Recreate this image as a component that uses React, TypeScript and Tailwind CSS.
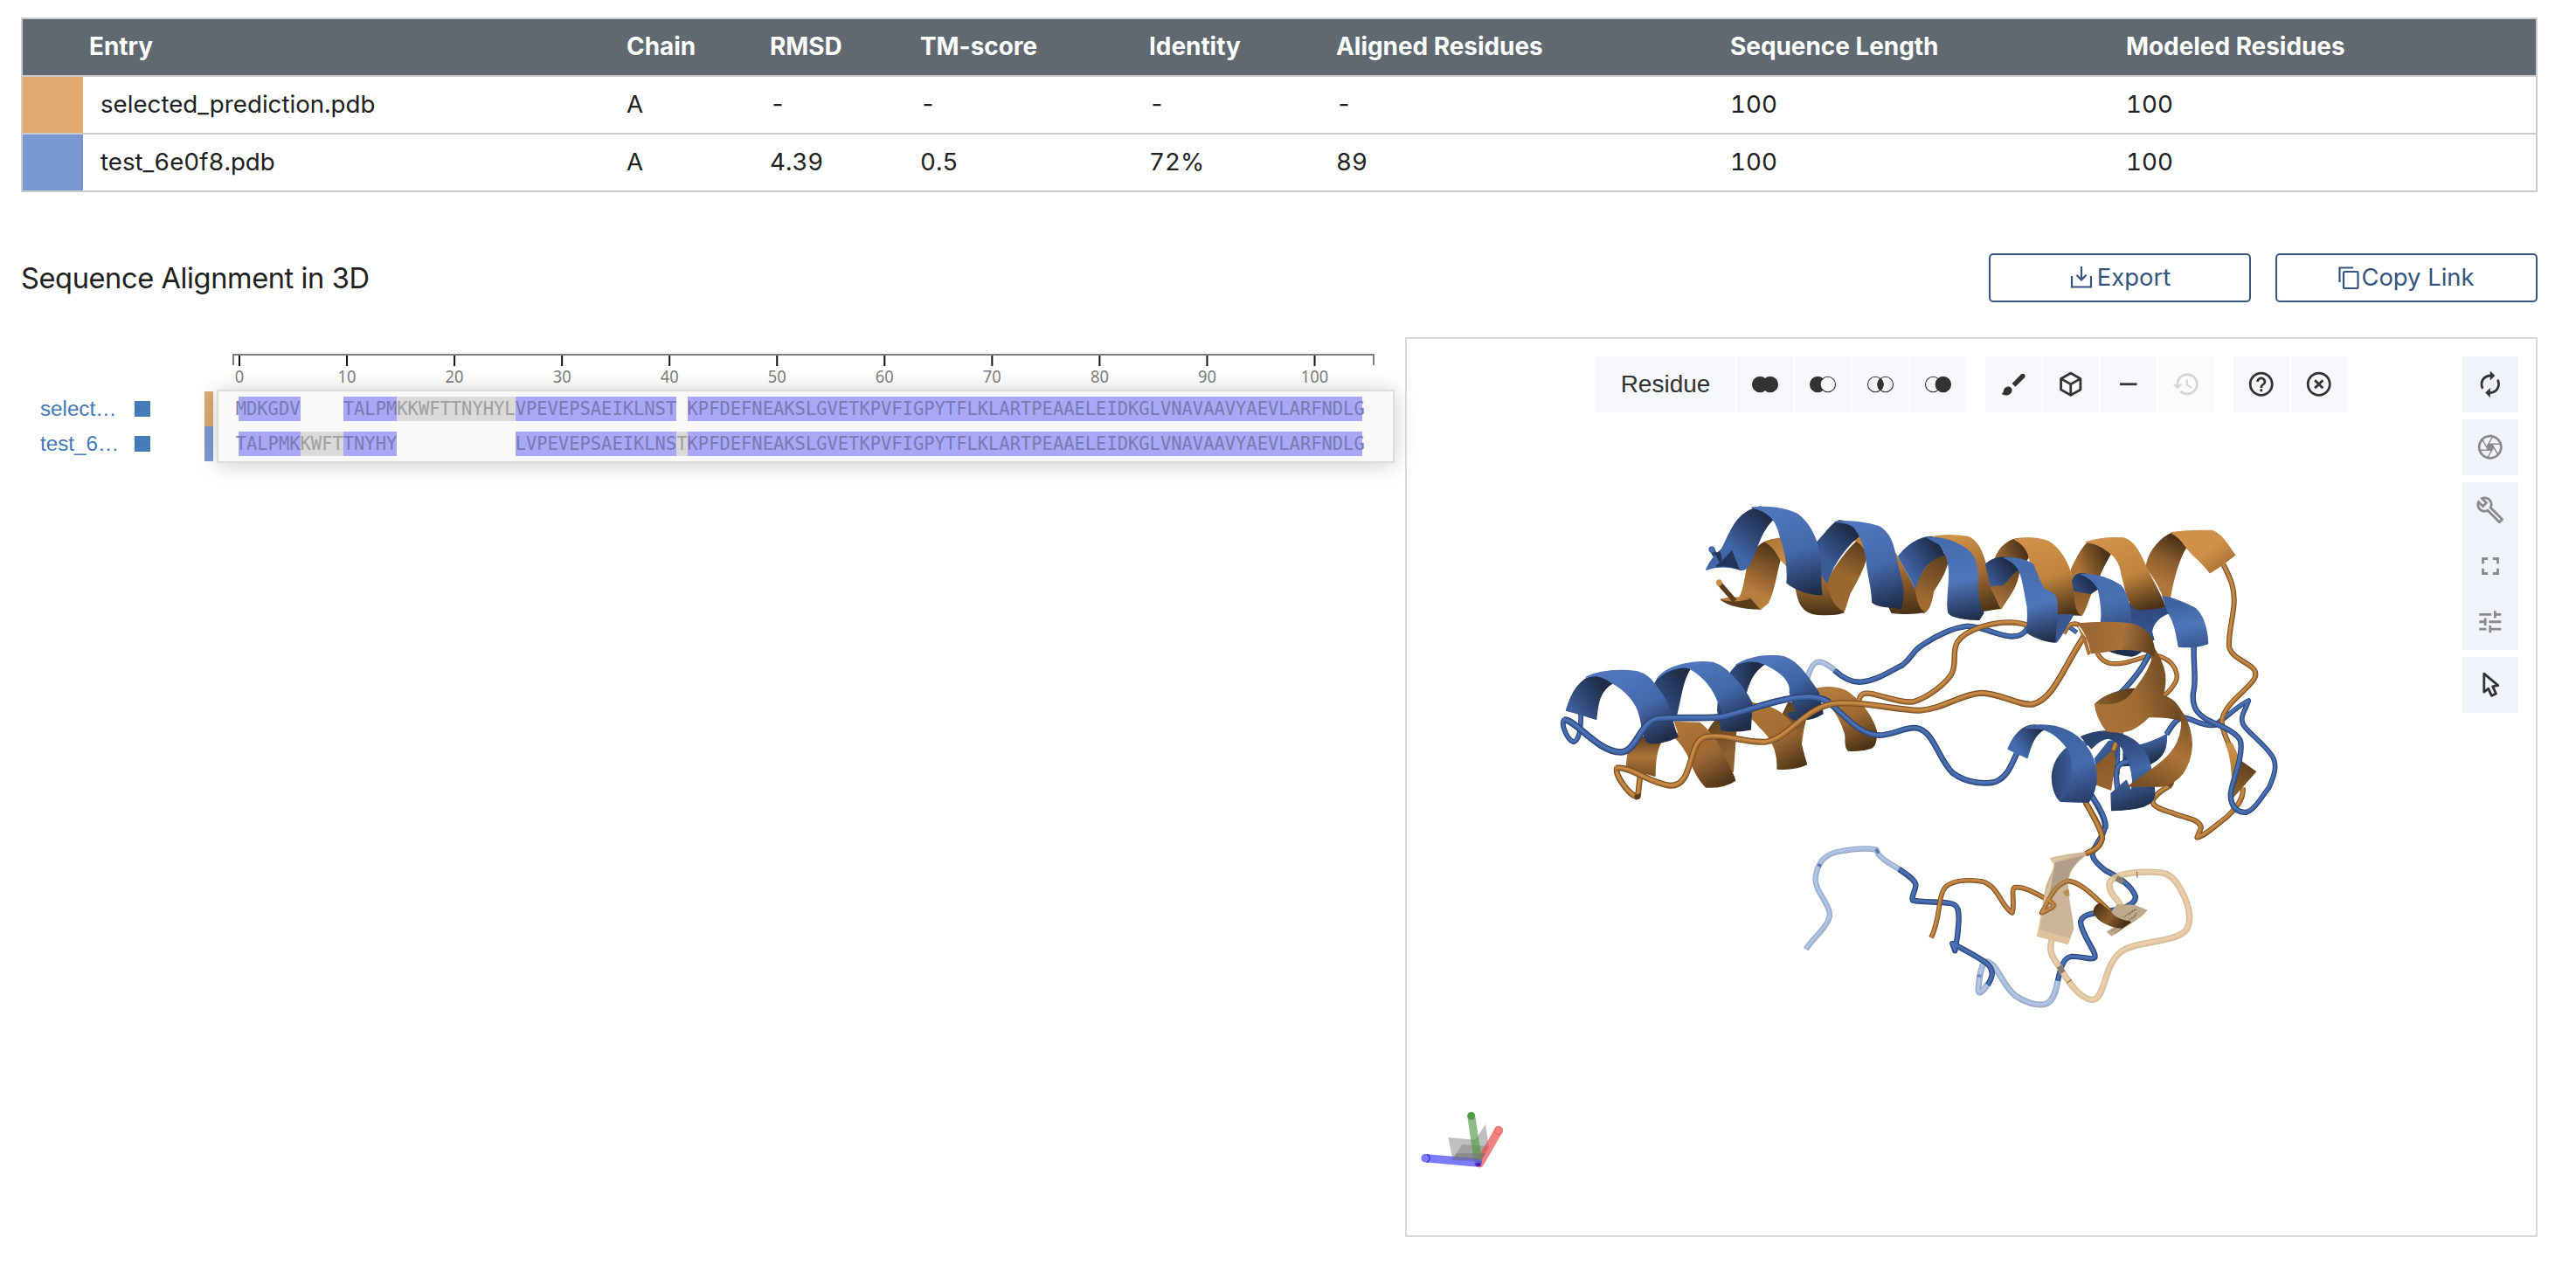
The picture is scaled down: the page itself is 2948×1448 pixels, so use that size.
import React from "react";
import { MdAutorenew, MdOutlineCamera, MdOutlineBuild, MdFullscreen, MdTune, MdHelpOutline, MdHighlightOff, MdHistory, MdRemove } from "react-icons/md";

/* ---------- summary table ---------- */
const COLS = "grid grid-cols-[69px_622px_164px_172px_262px_214px_451px_453px_1fr] items-center whitespace-nowrap";
const HEAD = ["Chain", "RMSD", "TM-score", "Identity", "Aligned Residues", "Sequence Length", "Modeled Residues"];
const ROWS = [
  { swatch: "bg-[#dfa970]", cells: ["selected_prediction.pdb", "A", "-", "-", "-", "-", "100", "100"] },
  { swatch: "bg-[#7998d1]", cells: ["test_6e0f8.pdb", "A", "4.39", "0.5", "72%", "89", "100", "100"] },
];

function SummaryTable() {
  return (
    <div className="border-2 border-[#cbcbcb] text-[#212121]">
      <div className={COLS + " h-16 bg-[#606972] text-[27.9px] text-white font-bold"}>
        <span />
        <span className="pl-[7px]">Entry</span>
        {HEAD.map((h) => <span key={h}>{h}</span>)}
      </div>
      {ROWS.map((r) => (
        <div key={r.cells[0]} className={COLS + " h-[66px] border-t-2 border-[#cbcbcb] text-[27.7px] tabular-nums"}>
          <span className={"self-stretch " + r.swatch} />
          {r.cells.map((c, i) => <span key={i} className={i === 0 ? "pl-5" : ""}>{c}</span>)}
        </div>
      ))}
    </div>
  );
}

/* ---------- sequence alignment ---------- */
const TAIL = "KPFDEFNEAKSLGVETKPVFIGPYTFLKLARTPEAAELEIDKGLVNAVAAVYAEVLARFNDLG";
type Seg = ["a" | "u" | "g", string];
const SEQ1: Seg[] = [["a", "MDKGDV"], ["g", "    "], ["a", "TALPM"], ["u", "KKWFTTNYHYL"], ["a", "VPEVEPSAEIKLNST"], ["g", " "], ["a", TAIL]];
const SEQ2: Seg[] = [["a", "TALPMK"], ["u", "KWFT"], ["a", "TNYHY"], ["g", "           "], ["a", "LVPEVEPSAEIKLNS"], ["u", "T"], ["a", TAIL]];
const SEGCLS = { a: "bg-[#a8a8f7] text-[#7979b4]", u: "bg-[#dadada] text-[#9e9e9e]", g: "" };

function SeqRow({ segs }: { segs: Seg[] }) {
  return (
    <div className="ml-[23px] flex h-7 font-['DejaVu_Sans_Mono',monospace] text-[20.44px] leading-[29px] whitespace-pre">
      {segs.map(([k, t], i) => (
        <span
          key={i}
          className={SEGCLS[k] + (i === 0 ? " indent-[-3.3px]" : "") + (i === segs.length - 1 ? " w-[772px]" : "")}
        >
          {t}
        </span>
      ))}
    </div>
  );
}

function Alignment() {
  const ticks = [0, 10, 20, 30, 40, 50, 60, 70, 80, 90, 100];
  return (
    <div className="w-[1584px] pt-[17px]">
      <svg width="1350" height="43" className="ml-[222px] block" fontFamily="'Noto Sans', sans-serif" fontSize="20">
        <path d="M21 15V3H1326V15" fill="none" stroke="#808080" strokeWidth="2" />
        {ticks.map((t) => {
          const x = 28 + t * 12.305;
          return (
            <g key={t}>
              <rect x={x - 1} y="4" width="2" height="12" fill="#111" />
              <text x={x} y="35" textAnchor="middle" fill="#808080" textLength={t === 0 ? 10.5 : t === 100 ? 31.5 : 21} lengthAdjust="spacingAndGlyphs">{t}</text>
            </g>
          );
        })}
      </svg>
      <div className="flex">
        <div className="w-[210px] pt-[2px] font-['Liberation_Sans',sans-serif] text-[24.2px] text-[#447ab5]">
          {["select…", "test_6…"].map((n) => (
            <div key={n} className="flex h-10 items-center pl-[22px]">
              <span className="w-[108px]">{n}</span>
              <span className="size-[18px] bg-[#447ab5]" />
            </div>
          ))}
        </div>
        <div className="mt-[2px] mr-1 w-[10px]">
          <div className="h-10 bg-[#dca972]" />
          <div className="h-10 bg-[#8199cf]" />
        </div>
        <div className="flex h-[84px] w-[1348px] flex-col gap-3 border-2 border-[#dcdcdc] bg-[#f9f9f9] pt-[6px] shadow-[0_2px_24px_rgba(0,0,0,0.2)]">
          <SeqRow segs={SEQ1} />
          <SeqRow segs={SEQ2} />
        </div>
      </div>
    </div>
  );
}

/* ---------- protein drawing ---------- */
const PAL = {
  b: ["#29406d", "#3c5f9f", "#4b71b7"],
  o: ["#744c20", "#a97137", "#c98a45"],
  pb: ["#93a5c4", "#a5b7da", "#b3c5e5"],
  po: ["#cdb08a", "#dfbf95", "#e8c89e"],
};
function Tube({ d, c, w = 19, o = 1 }: { d: string; c: keyof typeof PAL; w?: number; o?: number }) {
  const [a, m, l] = PAL[c];
  return (
    <g fill="none" strokeLinejoin="round" opacity={o}>
      <path d={d} stroke={a} strokeWidth={w} />
      <path d={d} stroke={m} strokeWidth={w * 0.72} />
      <path d={d} stroke={l} strokeWidth={w * 0.36} transform="translate(-1 -2)" />
    </g>
  );
}
const BL = "#4f76bc", BM = "#3d5f9c", BD = "#1f2d49";
const OL = "#cf9049", OM = "#ad7438", OD = "#4c3317";

let seq = 0;
function Rib({ d, g, s }: { d: string; g: [number, number, number, number]; s: string[] }) {
  const id = React.useMemo(() => "rib" + seq++, []);
  return (
    <>
      <linearGradient id={id} gradientUnits="userSpaceOnUse" x1={g[0]} y1={g[1]} x2={g[2]} y2={g[3]}>
        {s.map((c, i) => <stop key={i} offset={i / (s.length - 1)} stopColor={c} />)}
      </linearGradient>
      <path d={d} fill={`url(#${id})`} stroke={`url(#${id})`} strokeWidth="4" strokeLinejoin="round" />
    </>
  );
}
const T = "scale(0.333333)";
const GA = "translate(1760 560) " + T;
const GB = "translate(2200 560) " + T;
const GC = "translate(2040 900) " + T;
const GD = "translate(1600 1240) " + T;

function Protein() {
  return (
    <svg viewBox="1610 388 1292 1026" className="absolute inset-0 h-full w-full">
      {/* lower loops */}
      <g transform={GC}>
        <Tube c="pb" d="M80 560C105 520 160 480 162 440C160 400 110 360 113 315C118 270 140 235 190 225C240 215 290 212 322 218L330 235C350 260 380 270 400 285" />
        <path d="M121 268l12 7M320 216l10 14" stroke="#5879b0" strokeWidth="10" />
        <Tube c="pb" w={21} d="M704 680C685 710 672 715 672 700C675 650 685 605 700 602C740 610 750 680 800 720C850 752 890 755 910 745C935 730 940 690 945 668" />
        <path d="M668 651h15" stroke="#6d8ac0" strokeWidth="10" />
        <Tube c="b" d="M400 285C430 305 460 325 457 342C455 362 440 380 447 392C480 400 540 395 575 402C605 407 605 430 605 460C603 490 600 520 597 535L592 565L583 540C620 560 690 595 708 615C730 640 715 665 704 682" />
        <Tube c="b" d="M945 668C955 620 965 590 990 585C1030 583 1060 600 1072 588C1080 570 1025 510 1023 465C1030 440 1060 438 1100 430C1160 425 1210 410 1212 380C1200 340 1150 310 1110 290C1070 260 1060 240 1065 225C1080 190 1110 160 1107 130C1100 90 1075 60 1060 30" />
        <Tube c="po" w={22} o={0.88} d="M928 515C908 570 930 590 950 620C980 670 1020 732 1065 734C1110 725 1100 620 1160 570C1210 530 1330 540 1380 500C1410 470 1395 410 1375 370C1350 320 1330 298 1290 296C1220 290 1130 300 1122 335C1120 370 1150 385 1158 405C1160 425 1160 440 1165 450" />
        <path d="M1216 292l2 22M976 676l16-12" stroke="#94703f" strokeWidth="4" />
        <path d="M1146 316l24 14M950 618l12 22" stroke="#877c71" strokeWidth="19" />
        <path d="M1148 405L1210 408L1253 425L1240 440L1215 460L1130 515L1112 500L1150 475L1100 470Z" fill="#c0a88a" />
        <path d="M1170 450l30-20 18-8M1180 465l36-22M1130 497l25-14M1190 440l20-18M1200 455l16-20M1142 505l30-22" fill="none" stroke="#6d543a" strokeWidth="4" strokeDasharray="3 4" />
        <Tube c="o" w={17} d="M510 520C545 450 530 380 560 345C590 320 650 320 690 328C740 345 750 410 788 435C800 400 780 350 800 347C840 345 880 375 920 395C950 412 930 415 890 435C910 400 930 340 980 325C1030 330 1080 390 1125 430" />
        <Rib d="M1068 432C1070 415 1080 405 1090 403L1125 430C1140 455 1170 460 1194 467L1165 486C1130 485 1080 465 1068 432Z" g={[1080, 405, 1180, 480]} s={["#4a3016", "#8a5c2b", "#3c2813"]} />
        <path d="M917 247C950 238 1010 228 1045 226L1040 240C990 275 980 310 981 350C985 410 1000 460 1000 490L980 543L873 515C890 470 890 400 905 340C920 300 935 280 930 265Z" fill="#c3a985" opacity=".86" />
        <path d="M917 247L930 268C935 300 905 350 893 400L873 515L882 492C900 400 925 340 942 275L938 262L1010 235Z" fill="#e2c39c" opacity=".85" />
        <path d="M935 262L1035 238C990 275 980 310 981 320C965 325 945 350 915 380Z" fill="#a39482" opacity=".7" />
        <path d="M873 515L882 492L985 520L980 543Z" fill="#dfc29c" />
        <path d="M962 362l20-10 4 24-14 2z" fill="#b98f59" />
        <Tube c="o" w={15} d="M905 388C950 412 930 415 890 435C910 400 930 340 980 325" o={0.85} />
        <Tube c="o" d="M1040 55C1060 90 1100 150 1097 180C1090 210 1070 220 1040 232" />
      </g>

      {/* right hand loops and small strands */}
      <g transform={GB}>
        <Tube c="o" w={16} d="M600 562C620 600 650 605 700 595C760 580 790 560 830 580C870 600 880 640 870 660C855 690 840 700 826 712" />
        <Tube c="b" d="M782 560C755 620 710 670 680 700" />
        <Tube c="b" w={15} d="M775 470L790 520M705 395L725 410M500 470L530 492" />
        <Tube c="b" d="M665 860C675 900 665 930 668 980M555 875L600 850" />
        <Rib d="M592 925L640 865L676 862L665 930L650 1000L600 960Z" g={[600, 900, 670, 960]} s={[BM, "#2c4472"]} />
        <Rib d="M690 888C740 885 800 865 838 842C840 890 830 920 780 945L690 950Z" g={[760, 870, 780, 940]} s={[BM, BD]} />
        <Tube c="b" d="M670 1030C660 960 665 940 710 935" />
        <Tube c="o" d="M682 830L655 897" />
        <Rib d="M597 948L655 897L662 930L647 1032L592 1012Z" g={[600, 950, 660, 1030]} s={["#8a5c2a", "#9b6630"]} />
        <Tube c="o" w={18} d="M1100 1025C1105 1060 1080 1095 1040 1130C1000 1160 970 1190 943 1196L957 1162C950 1130 900 1130 860 1112C820 1100 790 1090 790 1072C800 1045 830 1030 850 1018" />
        <path d="M835 1015l33-20-6 20-8 12z" fill="#6f4a22" />
        <Tube c="b" d="M1010 808C970 818 930 790 900 785C870 785 855 815 838 842" />
        <Tube c="b" w={17} d="M1000 812C1050 780 1080 745 1120 726C1110 760 1090 775 1100 805C1110 830 1170 870 1200 915C1220 945 1210 980 1190 1025C1165 1055 1140 1105 1108 1110" />
        <Tube c="o" w={18} d="M1033 258C1060 310 1072 340 1070 390C1068 440 1048 500 1054 545C1065 580 1110 590 1135 615C1160 640 1130 665 1100 695C1070 722 1030 760 1028 800C1030 830 1046 860 1054 880" />
        <Rib d="M1102 940L1144 970L1068 1056C1066 1020 1080 980 1082 925Z" g={[1140, 950, 1070, 1040]} s={["#5d3f1d", "#8a5d2c"]} />
        <Rib d="M1042 876L1063 873L1084 918C1078 960 1068 990 1065 1010C1062 950 1058 910 1042 876Z" g={[1050, 880, 1070, 1000]} s={[OL, OM]} />
        <Tube c="b" d="M932 535C930 620 942 650 930 700C925 750 945 775 985 795C1030 815 1090 840 1093 870C1100 930 1060 1010 1058 1050C1060 1100 1090 1112 1115 1109" />
      </g>

      {/* middle loops */}
      <g transform={GA}>
        <Tube c="pb" w={19} d="M925 650C936 610 950 590 968 593C990 597 1005 610 1018 620" />
        <Tube c="b" d="M1018 622C1050 650 1080 665 1110 662C1160 658 1200 630 1250 605C1290 575 1280 560 1320 535C1370 500 1430 475 1475 470C1540 475 1570 500 1620 505C1650 508 1670 500 1685 470" />
        <Tube c="o" d="M1100 735C1105 700 1120 697 1150 703C1200 715 1250 735 1290 730C1350 710 1400 665 1420 635C1440 600 1420 560 1440 525C1470 480 1560 457 1620 457C1660 458 1680 465 1700 475" />
        <Tube c="o" w={17} d="M1805 495C1820 465 1835 455 1858 466" />
      </g>

      {/* lower left helices */}
      <g transform={GA}>
        <Tube c="b" d="M147 765C150 830 138 866 122 868C100 860 75 800 92 790" w={17} />
        <Rib d="M310 900L355 845L378 868L422 870C405 900 402 940 402 985L303 958Z" g={[350, 850, 350, 985]} s={["#5d3f1d", OM, "#7a5126"]} />
        <Rib d="M583 832C600 800 630 770 645 755L680 830L670 970C650 940 620 880 600 850Z" g={[600, 780, 670, 900]} s={["#5d3f1d", "#8f6030"]} />
        <Rib d="M470 800L555 802C590 830 600 850 615 870C640 920 665 960 677 1000C650 1018 610 1025 577 1023C545 990 530 950 525 935C510 900 490 870 468 850L482 835Z" g={[520, 810, 640, 1020]} s={[OM, "#9b6732", OD]} />
        <Rib d="M838 778L860 733L885 735L885 790L918 795C908 830 906 860 905 870C890 830 865 800 838 778Z" g={[840, 740, 900, 860]} s={["#5d3f1d", "#9b6732"]} />
        <Rib d="M735 733L800 750C850 770 880 810 900 850C905 890 915 920 923 945C890 960 850 962 822 960C825 900 800 850 760 815C740 790 725 780 718 770Z" g={[760, 750, 890, 960]} s={[OM, "#a06b33", OD]} />
        <Rib d="M955 685C1000 675 1050 680 1075 705C1120 740 1150 790 1162 830C1163 860 1160 880 1145 888C1120 897 1090 900 1065 897C1050 880 1060 860 1055 840C1040 790 1020 760 1000 740Z" g={[1020, 690, 1110, 895]} s={["#b47a3c", "#9b6732", OD]} />
        <Rib d="M97 760C115 700 140 650 205 635C230 640 245 655 258 665C210 690 205 740 200 790L130 768Z" g={[105, 740, 215, 670]} s={[BM, BD]} />
        <Rib d="M396 680C415 625 470 605 500 608L522 618C495 660 490 720 475 778L435 790C425 760 400 720 385 690Z" g={[420, 700, 500, 650]} s={["#2f4877", BD]} />
        <Rib d="M655 640C680 595 720 580 745 585L780 600C745 620 725 660 716 695L700 720C680 690 665 670 650 645Z" g={[670, 620, 740, 610]} s={["#2f4877", BD]} />
        <Rib d="M165 645C220 620 290 620 340 626C370 635 390 652 402 672C425 700 440 722 450 750C460 790 470 830 480 850C450 865 400 880 375 868C355 845 360 810 350 780C340 730 300 690 255 665C235 650 215 643 200 640Z" g={[300, 630, 430, 860]} s={[BL, "#4468ab", BD]} />
        <path d="M618 720L655 775L650 820L628 828L615 760Z" fill="#2c4370" />
        <Rib d="M410 650C450 600 540 588 600 595C630 605 650 620 665 640C695 668 715 695 735 735L730 825C690 832 650 832 628 825L640 780C615 720 600 660 520 615C495 605 440 620 410 650Z" g={[560, 595, 690, 820]} s={[BL, "#4267a9", BD]} />
        <Rib d="M680 603C740 570 790 570 830 573C890 580 930 650 965 700L978 770C950 790 910 795 885 792C870 790 860 780 858 768L885 765L865 700C870 660 840 630 778 600C745 585 715 587 680 603Z" g={[800, 580, 940, 780]} s={[BL, "#3f63a4", BD]} />
        <Tube c="b" w={23} d="M90 792C130 790 200 900 285 903C340 900 350 800 410 788C500 780 580 790 640 780C740 755 830 715 930 713C960 714 985 722 1000 732" />
        <Tube c="b" w={20} d="M1000 735C1050 770 1100 843 1170 845C1220 845 1260 815 1300 820C1360 830 1375 930 1425 975C1475 1012 1540 1013 1570 1005C1610 990 1625 950 1645 905" />
        <Tube c="o" w={20} d="M352 975L343 1055C320 1060 260 980 272 955" />
        <path d="M330 1050l24-6-4 18-14 5z" fill="#5a3c1b" />
        <Tube c="o" w={21} d="M268 958C320 950 380 1010 455 1018C540 1020 510 860 580 850C650 840 700 870 780 868C860 860 920 740 1030 735C1130 730 1220 757 1310 760C1390 755 1450 705 1520 700C1590 700 1650 745 1700 738C1770 720 1800 620 1875 505" />
      </g>

      {/* top helices: orange */}
      <g transform={GA}>
        <Rib d="M692 372C712 340 710 290 722 262C740 210 760 185 790 178L832 240C815 300 812 350 790 390L763 413L730 378Z" g={[810, 190, 740, 350]} s={[OD, "#83572a", "#b87c3d"]} />
        <Rib d="M780 180C800 172 820 168 845 169L870 280L832 240C820 215 805 195 780 180Z" g={[830, 170, 850, 260]} s={["#b0763a", OL]} />
        <path d="M625 378C650 372 700 370 730 374L763 413C710 413 650 402 625 378Z" fill="#5b3d1b" />
        <path d="M625 378C650 368 700 368 728 376C700 388 650 388 625 378Z" fill="#b97d3e" />
        <path d="M622 322L676 384" stroke="#5b3d1b" strokeWidth="17" />
        <ellipse cx="622" cy="321" rx="10" ry="11" fill="#cf9049" />
        <Rib d="M992 320C1010 280 1060 210 1100 175L1130 215C1125 270 1085 330 1070 360C1060 390 1055 415 1048 424C1010 405 1000 370 992 320Z" g={[1105, 190, 1020, 400]} s={["#5d3f1d", "#99672f", "#9b6732"]} />
        <Rib d="M885 335L945 330L955 250L970 262L992 320C1000 370 1010 400 1048 422C1035 431 1000 432 960 430C905 425 893 385 885 335Z" g={[970, 270, 970, 425]} s={[OM, "#8a5d2c", OD]} />
        <path d="M1075 172L1118 158L1132 225C1115 195 1100 180 1075 172Z" fill="#bd8140" />
        <Rib d="M1293 340C1310 300 1330 270 1350 250C1370 235 1385 230 1410 215C1410 280 1375 320 1358 350C1350 390 1345 415 1325 424C1305 410 1300 380 1293 340Z" g={[1390, 230, 1320, 380]} s={["#5d3f1d", "#a06b33"]} />
        <Rib d="M1212 195C1250 260 1275 300 1293 345C1300 380 1305 410 1325 422C1290 428 1240 428 1215 424L1203 400L1230 395L1235 340Z" g={[1250, 260, 1270, 420]} s={[OM, "#7a5126", OD]} />
      </g>
      <g transform={GB}>
        <Rib d="M35 163C80 155 120 158 155 163C190 175 205 215 218 260C230 320 250 370 272 408L195 420L165 330C180 260 160 215 110 180Z" g={[140, 160, 230, 415]} s={[OL, "#a06b33", OD]} />
        <Rib d="M230 325L280 322C300 305 320 280 335 260C330 320 310 350 290 380L270 410Z" g={[320, 280, 250, 390]} s={["#6a4720", "#a9713a"]} />
        <Rib d="M248 245C260 200 300 165 345 170L375 215C365 235 355 245 350 255C320 238 270 235 248 245Z" g={[255, 230, 345, 200]} s={["#9b6732", OD]} />
        <Rib d="M318 173C360 163 400 168 430 178C470 200 500 250 512 300C522 340 522 390 547 432L455 430C450 370 430 350 405 345C385 310 365 280 370 255C368 220 350 190 318 173Z" g={[400, 170, 490, 430]} s={[OL, "#c0843f", OD]} />
        <Rib d="M520 340L582 350C567 385 560 415 547 432C525 420 525 390 520 340Z" g={[545, 350, 540, 430]} s={["#8a5d2c", "#a06b33"]} />
        <Rib d="M510 278C530 235 550 195 572 180C600 178 630 200 648 218C630 250 612 280 606 303L545 295L518 310Z" g={[530, 260, 625, 220]} s={[OM, OD]} />
        <Rib d="M770 258C780 210 820 165 862 148L905 200C880 240 865 290 850 372L828 372C810 320 790 300 768 265Z" g={[890, 180, 820, 320]} s={[OD, "#8a5d2c", "#b0763a"]} />
        <Rib d="M855 150C900 140 950 143 995 142C1030 155 1050 195 1073 226L1040 252L987 287C970 260 930 230 905 198C890 175 875 160 855 150Z" g={[940, 150, 1030, 270]} s={[OL, OL, OM]} />
      </g>

      {/* top helices: blue */}
      <g transform={GB}>
        <Rib d="M705 395L728 405L834 400L848 425C800 440 780 480 790 510C780 540 740 570 718 573C680 570 650 560 635 552L705 465L708 430Z" g={[760, 410, 720, 570]} s={["#2f4a7f", "#35548c", BD]} />
        <Rib d="M825 368C860 372 910 395 938 410C970 440 978 490 980 530C950 542 910 543 880 540C872 500 868 460 845 425Z" g={[900, 390, 930, 540]} s={["#3f62a2", BL, "#3b5a94"]} />
        <Rib d="M562 182C600 170 650 165 690 168C730 180 745 220 765 260C785 310 815 350 832 402C800 412 760 415 728 410C700 380 695 330 685 295C680 250 655 225 640 215C610 190 590 186 562 182Z" g={[680, 170, 770, 412]} s={[OL, "#c0843f", OD]} />
        <Rib d="M515 315C520 295 535 288 555 290C580 300 600 325 605 340L578 358L522 348Z" g={[530, 340, 580, 310]} s={["#2f4877", BD]} />
        <Rib d="M545 292C600 290 650 310 680 330C700 350 705 380 712 410L718 465L613 458C620 420 610 370 603 340C590 320 570 300 545 292Z" g={[620, 295, 670, 465]} s={["#476cb0", "#4a70b4", "#38568f"]} />
        <Rib d="M218 258C240 235 270 232 295 235C315 245 325 260 332 275C300 290 290 320 275 328L235 332Z" g={[230, 320, 300, 260]} s={["#3a5a95", BD]} />
        <Rib d="M455 430L518 432C495 470 475 510 460 525L430 500Z" g={[500, 430, 460, 520]} s={["#38568f", "#3a5a95"]} />
        <Rib d="M280 235C320 232 360 245 380 258C395 295 405 325 420 345C440 352 455 360 460 375C470 420 455 480 456 525C430 525 380 510 357 490C365 440 362 420 360 400C350 350 345 300 330 275C318 255 300 242 280 235Z" g={[370, 260, 430, 525]} s={["#466bae", BL, BD]} />
      </g>
      <g transform={GA}>
        <path d="M597 207L624 250" stroke="#2c4270" strokeWidth="18" />
        <circle cx="597" cy="207" r="11" fill="#476cb0" />
        <Rib d="M578 276C590 250 600 235 632 205L668 208L720 265L697 277C650 262 610 265 578 276Z" g={[590, 240, 700, 270]} s={["#4267a9", BM]} />
        <path d="M612 262L632 246L668 208L694 277C670 268 650 264 612 266Z" fill="#22345a" />
        <path d="M606 220L626 213L632 240L626 255Z" fill="#22345a" />
        <Rib d="M632 205C660 150 680 75 765 60C790 70 800 85 808 102C770 140 760 180 745 215C725 270 715 278 695 277L668 208Z" g={[670, 210, 780, 90]} s={["#4267a9", "#2f4877", BD]} />
        <Rib d="M955 185C990 150 1010 115 1035 108C1070 110 1100 130 1112 155C1070 180 1015 250 992 320L950 260Z" g={[980, 230, 1070, 140]} s={["#3a5a95", BD]} />
        <Rib d="M735 63C790 57 850 65 890 85C940 120 965 190 968 240C974 290 968 330 975 362C940 362 890 350 855 322C860 260 850 210 830 155C820 115 800 75 735 63Z" g={[840, 65, 930, 360]} s={[BL, "#4468ab", BD]} />
        <Rib d="M1238 230C1270 190 1310 165 1350 163C1375 175 1385 200 1394 225C1350 240 1320 260 1295 340C1280 300 1255 265 1238 230Z" g={[1260, 260, 1365, 190]} s={["#3f63a4", BD]} />
        <Rib d="M1020 112C1080 107 1130 115 1170 128C1210 150 1220 190 1230 240C1245 310 1260 340 1252 380L1247 409L1190 403C1165 400 1155 395 1148 388C1148 330 1130 290 1128 240C1120 190 1110 160 1085 130C1070 118 1050 112 1020 112Z" g={[1120, 115, 1215, 410]} s={[BL, "#4468ab", BD]} />
        <Rib d="M1335 165C1400 165 1440 185 1460 198C1500 220 1508 260 1510 300C1508 350 1510 400 1530 425L1515 448C1470 448 1420 440 1410 425C1400 390 1415 330 1412 280C1410 240 1395 210 1380 190Z" g={[1420, 180, 1480, 450]} s={["#466bae", BL, BD]} />
      </g>

      {/* front right helices */}
      <g transform={GB}>
        <Tube c="b" d="M580 1050C610 1090 635 1140 629 1165" w={17} />
        <Tube c="o" d="M558 1070C590 1130 620 1180 617 1200C610 1230 590 1240 563 1250" />
        <Rib d="M545 850C590 830 640 825 680 840C740 860 775 900 785 960C790 1000 800 1030 797 1055C790 1085 750 1100 650 1103L648 1045L700 1000L718 1040L722 1000C715 930 690 870 640 855C620 855 600 870 580 890Z" g={[680, 840, 760, 1100]} s={["#2c4370", "#4267a9", BD]} />
        <Rib d="M445 985C450 930 480 900 500 885L560 950L540 1073L475 1072C460 1060 445 1030 445 985Z" g={[450, 980, 530, 980]} s={["#2c4370", "#3f63a4"]} />
        <Rib d="M294 892C310 850 340 810 385 810L425 822C380 840 370 890 360 923Z" g={[320, 880, 400, 820]} s={["#466bae", BD]} />
        <Rib d="M355 820C370 810 400 810 410 810C470 810 530 835 560 880C595 920 600 980 596 1010C590 1040 580 1065 570 1075L477 1072C520 1010 525 950 505 900C480 860 440 825 400 822Z" g={[480, 830, 560, 1070]} s={["#3f62a2", "#466bae", "#2a3f6b"]} />
        <Rib d="M593 738C620 710 680 685 735 685C710 735 660 750 593 738Z" g={[600, 735, 720, 700]} s={["#8a5d2c", "#5b3d1b"]} />
        <Rib d="M765 782C790 760 810 730 825 708C860 720 890 745 893 795C860 785 810 780 765 782Z" g={[790, 760, 890, 780]} s={["#8f6030", "#6a4720"]} />
        <Rib d="M825 710C880 730 925 800 925 880C920 960 880 1010 820 1020L707 1020C760 980 850 930 875 870C890 840 895 800 885 765C870 735 845 720 825 710Z" g={[910, 780, 780, 1020]} s={["#7a5126", OM, "#7a5126"]} />
        <Rib d="M792 540C830 600 840 640 830 690C820 740 770 800 720 825C690 835 650 835 632 830C610 800 595 770 593 738C640 745 690 740 720 700C760 650 790 600 790 570Z" g={[640, 740, 830, 700]} s={["#a9713a", "#a06b33", "#7a5126"]} />
        <Rib d="M535 462C600 455 680 455 730 465C780 485 800 520 795 572C760 550 700 545 650 553C620 560 600 562 580 563C575 530 560 490 535 462Z" g={[580, 500, 790, 540]} s={["#9b6732", "#a9713a", "#60411e"]} />
        <path d="M530 465L562 510L578 565L568 571L545 500Z" fill="#a9713a" />
      </g>

      {/* orientation axes */}
      <g transform={GD}>
        <path d="M172 186L265 194L300 140L312 220L285 268L188 264Z" fill="#808080" opacity=".5" />
        <path d="M220 210L310 216L286 266L186 264Z" fill="#888" opacity=".55" />
        <path d="M345 162L280 275" stroke="#e94b4b" strokeOpacity=".7" strokeWidth="29" strokeLinecap="round" />
        <circle cx="345" cy="162" r="14" fill="none" stroke="#e05050" strokeWidth="2" />
        <path d="M251 112L275 270" stroke="#4e9a44" strokeOpacity=".65" strokeWidth="27" strokeLinecap="round" />
        <circle cx="251" cy="112" r="13" fill="#519c46" />
        <path d="M93 257L274 273" stroke="#5252fb" strokeOpacity=".76" strokeWidth="28" strokeLinecap="round" />
        <path d="M186 264L286 266L300 240L200 240Z" fill="#777" opacity=".5" />
        <path d="M98 244a14 14 0 0 1 0 27" fill="none" stroke="#2f2fe8" strokeWidth="4" />
        <path d="M263 276l18-4 2 13-14-1z" fill="#5718a8" />
      </g>
    </svg>
  );
}

/* ---------- viewer chrome ---------- */
function Mdi({ d }: { d: string }) {
  return <svg viewBox="0 0 24 24" className="size-[33.5px]" fill="currentColor"><path d={d} /></svg>;
}
const CUBE = "M21,16.5C21,16.88 20.79,17.21 20.47,17.38L12.57,21.82C12.41,21.94 12.21,22 12,22C11.79,22 11.59,21.94 11.43,21.82L3.53,17.38C3.21,17.21 3,16.88 3,16.5V7.5C3,7.12 3.21,6.79 3.53,6.62L11.43,2.18C11.59,2.06 11.79,2 12,2C12.21,2 12.41,2.06 12.57,2.18L20.47,6.62C20.79,6.79 21,7.12 21,7.5V16.5M12,4.15L6.04,7.5L12,10.85L17.96,7.5L12,4.15M5,15.91L11,19.29V12.58L5,9.21V15.91M19,15.91V9.21L13,12.58V19.29L19,15.91Z";
const CURSOR = "M10.07,14.27C10.57,14.03 11.16,14.25 11.4,14.75L13.7,19.74L15.5,18.89L13.19,13.91C12.95,13.41 13.17,12.81 13.67,12.58L13.95,12.5L16.25,12.05L8,5.12V15.9L9.82,14.43L10.07,14.27M13.64,21.97C13.14,22.21 12.54,22 12.31,21.5L10.13,16.76L7.62,18.78C7.45,18.92 7.24,19 7,19A1,1 0 0,1 6,18V3A1,1 0 0,1 7,2C7.24,2 7.47,2.09 7.64,2.23L7.65,2.22L19.14,11.86C19.57,12.22 19.62,12.85 19.27,13.27C19.12,13.45 18.91,13.57 18.7,13.61L15.54,14.23L17.74,18.96C18,19.46 17.76,20.05 17.26,20.28L13.64,21.97Z";

function Venn({ kind }: { kind: "union" | "subtract" | "intersect" | "set" }) {
  const lens = "M16 3.3A8.7 8.7 0 0 1 16 16.7A8.7 8.7 0 0 1 16 3.3Z";
  return (
    <svg width="32" height="20" viewBox="0 0 32 20" stroke="#333" strokeWidth="1.1">
      <circle cx="10.2" cy="10" r="8.7" fill={kind === "union" || kind === "subtract" ? "#333" : "none"} />
      <circle cx="21.8" cy="10" r="8.7" fill={kind === "union" || kind === "set" ? "#333" : kind === "subtract" ? "#f7f8fc" : "none"} />
      {kind === "intersect" && <path d={lens} fill="#333" />}
    </svg>
  );
}
function Brush() {
  return (
    <svg width="28" height="28" viewBox="0 0 28 28" fill="#333">
      <path d="M14.5 14.8L24.8 4.5" stroke="#333" strokeWidth="5.4" />
      <circle cx="24.9" cy="4.3" r="2.6" />
      <path d="M7.5 16.6c3.2-.7 5.7 1.900 5 5-.6 3.300-4.200 5.400-7.300 4.900-1.900-.2-3.700-1-4.700-2 1.600-.3 2-1.300 2.300-3 .4-2.500 2-4.400 4.700-4.900z" />
    </svg>
  );
}
function Btn({ children, cls = "bg-[#f7f8fc]" }: { children: React.ReactNode; cls?: string }) {
  return <div className={"flex size-16 items-center justify-center text-[#333] " + cls}>{children}</div>;
}
const MD = "size-[33.5px]";

function Viewer() {
  return (
    <div className="relative h-[1030px] w-[1296px] border-2 border-[#d9d9d9]">
      <Protein />
      <div className="absolute left-[216px] top-5 flex gap-[22px]">
        <div className="flex gap-[2px]">
          <div className="flex h-16 w-40 items-center justify-center bg-[#f7f8fc] font-['Liberation_Sans',sans-serif] text-[28px] text-[#333]">Residue</div>
          <Btn><Venn kind="union" /></Btn>
          <Btn><Venn kind="subtract" /></Btn>
          <Btn><Venn kind="intersect" /></Btn>
          <Btn><Venn kind="set" /></Btn>
        </div>
        <div className="flex gap-[2px]">
          <Btn><Brush /></Btn>
          <Btn><Mdi d={CUBE} /></Btn>
          <Btn><MdRemove className={MD} /></Btn>
          <Btn cls="bg-[#fafbfd]"><MdHistory className={MD + " text-[#d6d6d7]"} /></Btn>
        </div>
        <div className="flex gap-[2px]">
          <Btn><MdHelpOutline className={MD} /></Btn>
          <Btn><MdHighlightOff className={MD} /></Btn>
        </div>
      </div>
      <div className="absolute right-5 top-5 flex flex-col gap-2">
        <Btn cls="bg-[#f0f3f9]"><MdAutorenew className={MD} /></Btn>
        <Btn cls="bg-[#f0f3f9]"><MdOutlineCamera className={MD + " text-[#888a8c]"} /></Btn>
        <div className="bg-[#f0f3f9]">
          <Btn cls=""><MdOutlineBuild className={MD + " text-[#888a8c]"} /></Btn>
          <Btn cls=""><MdFullscreen className="size-[34px] text-[#888a8c]" /></Btn>
          <Btn cls=""><MdTune className={MD + " text-[#888a8c]"} /></Btn>
        </div>
        <Btn cls="bg-[#f0f3f9]"><Mdi d={CURSOR} /></Btn>
      </div>
    </div>
  );
}

const ACTION = "flex h-14 w-[300px] items-center justify-center rounded-[5px] border-2 border-[#35547f] text-[27.4px] text-[#35547f]";

export default function App() {
  return (
    <div className="h-[1448px] w-[2948px] overflow-hidden bg-white px-6 pt-5 font-[Inter,sans-serif]">
      <div className="w-[2880px]">
        <SummaryTable />
        <div className="mt-[70px] flex h-14 items-center">
          <h2 className="flex-1 text-[32.6px] tracking-[-0.4px] text-[#212121]">Sequence Alignment in 3D</h2>
          <div className="flex gap-7">
            <button className={ACTION}>
              <svg width="32" height="28" viewBox="0 0 32 28" fill="none" stroke="currentColor" strokeWidth="2.2">
                <path d="M3 12v12.500h22V12M14 1v15M8.500 10.800L14 16.400L19.500 10.800" />
              </svg>
              Export
            </button>
            <button className={ACTION}>
              <svg width="26" height="28" viewBox="0 0 26 28" fill="none" stroke="currentColor" strokeWidth="2.2">
                <path d="M1.500 19V2.500H17" />
                <rect x="6" y="7" width="16.500" height="19" rx="1.500" />
              </svg>
              Copy Link
            </button>
          </div>
        </div>
        <div className="mt-10 flex">
          <Alignment />
          <Viewer />
        </div>
      </div>
    </div>
  );
}
